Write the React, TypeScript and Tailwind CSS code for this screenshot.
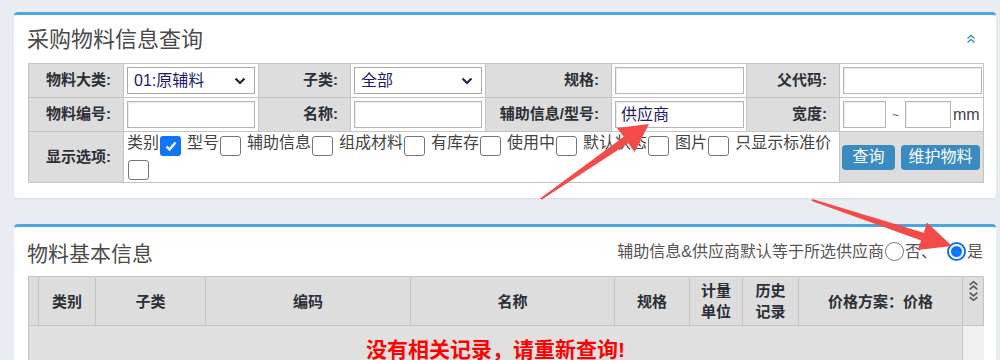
import type { ReactNode } from "react";

const FONT = "font-['Liberation_Sans','Noto_Sans_CJK_SC',sans-serif]";

function Chevron() {
  return (
    <svg width="12" height="8" viewBox="0 0 12 8" className="shrink-0">
      <polyline points="1.5,1.5 6,6 10.5,1.5" fill="none" stroke="#1f2547" strokeWidth="2.2" />
    </svg>
  );
}

function Select({ value, width }: { value: string; width: string }) {
  return (
    <div
      className={`flex h-[27px] items-center justify-between border border-[#a9a9a9] bg-white pl-[6px] pr-[8px] text-[16px] text-[#1e1b6b] ${width}`}
    >
      <span>{value}</span>
      <Chevron />
    </div>
  );
}

function Input({ value = "", className = "" }: { value?: string; className?: string }) {
  return (
    <div
      className={`flex h-[27px] items-center border border-[#b5b5b5] bg-white pl-[5px] text-[16px] text-[#1e1b6b] shadow-[inset_1px_1px_1px_rgba(0,0,0,0.08)] ${className}`}
    >
      {value}
    </div>
  );
}

function Label({ children }: { children: ReactNode }) {
  return (
    <td className="border border-[#c4c4c4] bg-[#dddddd] pr-[12px] text-right text-[15px] font-bold text-[#2b2f36]">
      {children}
    </td>
  );
}

function Box({ checked = false }: { checked?: boolean }) {
  if (checked) {
    return (
      <span className="ml-[1px] mr-[6px] mt-[4px] flex h-[20px] w-[21px] shrink-0 items-center justify-center rounded-[3px] bg-[#0f74f5]">
        <svg width="14" height="14" viewBox="0 0 14 14">
          <polyline points="2.5,7.5 5.5,10.5 11.5,3.5" fill="none" stroke="white" strokeWidth="2.4" />
        </svg>
      </span>
    );
  }
  return (
    <span className="ml-[1px] mr-[6px] mt-[4px] block h-[20px] w-[21px] shrink-0 rounded-[3px] border-[1.5px] border-[#767676] bg-white" />
  );
}

function Radio({ checked = false }: { checked?: boolean }) {
  if (checked) {
    return (
      <span className="mx-[1px] flex h-[19px] w-[19px] items-center justify-center rounded-full border-2 border-[#0f74f5] bg-white">
        <span className="h-[11px] w-[11px] rounded-full bg-[#0f74f5]" />
      </span>
    );
  }
  return <span className="mx-[1px] block h-[19px] w-[19px] rounded-full border-[1.5px] border-[#767676] bg-white" />;
}

const OPTIONS = ["类别", "型号", "辅助信息", "组成材料", "有库存", "使用中", "默认状态", "图片", "只显示标准价"];

function DoubleUp({ color, size = 10 }: { color: string; size?: number }) {
  return (
    <svg width={size} height={size} viewBox="0 0 10 10">
      <polyline points="1.5,4.5 5,1.5 8.5,4.5" fill="none" stroke={color} strokeWidth="1.4" />
      <polyline points="1.5,8.5 5,5.5 8.5,8.5" fill="none" stroke={color} strokeWidth="1.4" />
    </svg>
  );
}

function DoubleDown({ color, size = 10 }: { color: string; size?: number }) {
  return (
    <svg width={size} height={size} viewBox="0 0 10 10">
      <polyline points="1.5,1.5 5,4.5 8.5,1.5" fill="none" stroke={color} strokeWidth="1.4" />
      <polyline points="1.5,5.5 5,8.5 8.5,5.5" fill="none" stroke={color} strokeWidth="1.4" />
    </svg>
  );
}

const HEAD = [
  { w: "w-[10px]", t: "" },
  { w: "w-[57px]", t: "类别" },
  { w: "w-[110px]", t: "子类" },
  { w: "w-[205px]", t: "编码" },
  { w: "w-[204px]", t: "名称" },
  { w: "w-[75px]", t: "规格" },
  { w: "w-[53px]", t: "计量\n单位" },
  { w: "w-[56px]", t: "历史\n记录" },
  { w: "w-[164px]", t: "价格方案：价格" },
];

export default function App() {
  return (
    <div className={`relative h-[360px] w-[1000px] overflow-hidden bg-[#e9edf2] pl-[14px] pr-[4px] pt-[12px] ${FONT}`}>
      {/* 查询 */}
      <div className="rounded-[4px] border-t-[3px] border-[#4aa5e0] bg-white pb-[15px] shadow-[0_1px_2px_rgba(0,0,0,0.08)]">
        <div className="flex h-[48px] items-center justify-between pl-[13px] pr-[20px]">
          <h2 className="text-[22px] text-[#4a4a4a]">采购物料信息查询</h2>
          <DoubleUp color="#3c8dbc" />
        </div>
        <table className="ml-[14px] w-[955px] table-fixed border-collapse">
          <colgroup>
            <col className="w-[95px]" />
            <col className="w-[135px]" />
            <col className="w-[92px]" />
            <col className="w-[135px]" />
            <col className="w-[126px]" />
            <col className="w-[135px]" />
            <col className="w-[93px]" />
            <col className="w-[144px]" />
          </colgroup>
          <tbody>
            <tr className="h-[34px]">
              <Label>物料大类:</Label>
              <td className="border border-[#c4c4c4] px-[3px]">
                <Select value="01:原辅料" width="w-[128px]" />
              </td>
              <Label>子类:</Label>
              <td className="border border-[#c4c4c4] px-[3px]">
                <Select value="全部" width="w-[128px]" />
              </td>
              <Label>规格:</Label>
              <td className="border border-[#c4c4c4] px-[3px]">
                <Input className="w-[129px]" />
              </td>
              <Label>父代码:</Label>
              <td className="border border-[#c4c4c4] px-[3px]">
                <Input className="w-[139px]" />
              </td>
            </tr>
            <tr className="h-[34px]">
              <Label>物料编号:</Label>
              <td className="border border-[#c4c4c4] px-[3px]">
                <Input className="w-[128px]" />
              </td>
              <Label>名称:</Label>
              <td className="border border-[#c4c4c4] px-[3px]">
                <Input className="w-[128px]" />
              </td>
              <Label>辅助信息/型号:</Label>
              <td className="border border-[#c4c4c4] px-[3px]">
                <Input value="供应商" className="w-[129px]" />
              </td>
              <Label>宽度:</Label>
              <td className="border border-[#c4c4c4] px-[3px]">
                <div className="flex items-center text-[15px] text-[#333]">
                  <Input className="w-[43px]" />
                  <span className="w-[19px] text-center text-[12px] text-[#666]">~</span>
                  <Input className="w-[46px]" />
                  <span className="ml-[2px] text-[16px] text-[#444]">mm</span>
                </div>
              </td>
            </tr>
            <tr className="h-[51px]">
              <Label>显示选项:</Label>
              <td colSpan={6} className="border border-[#c4c4c4] pl-[3px] align-top">
                <div className="flex flex-wrap text-[16px] leading-[21px] text-[#444]">
                  {OPTIONS.map((o, i) => (
                    <span key={o} className="contents">
                      <span className="h-[21px]">{o}</span>
                      <Box checked={i === 0} />
                    </span>
                  ))}
                </div>
              </td>
              <td className="border border-[#c4c4c4] bg-[#dddddd] pl-[2px]">
                <div className="flex gap-[6px]">
                  <button className="h-[25px] w-[53px] rounded-[4px] bg-[#3a8bc2] text-[16px] text-white">查询</button>
                  <button className="h-[25px] w-[79px] rounded-[4px] bg-[#3a8bc2] text-[16px] text-white">维护物料</button>
                </div>
              </td>
            </tr>
          </tbody>
        </table>
      </div>

      {/* 物料基本信息 */}
      <div className="mt-[26px] rounded-[4px] border-t-[3px] border-[#4aa5e0] bg-white">
        <div className="flex h-[49px] items-center justify-between pl-[13px] pr-[13px]">
          <h2 className="mt-[4px] text-[21px] text-[#4a4a4a]">物料基本信息</h2>
          <div className="flex items-center text-[16px] text-[#555]">
            <span>辅助信息&amp;供应商默认等于所选供应商</span>
            <Radio />
            <span className="mr-[9px]">否、</span>
            <Radio checked />
            <span>是</span>
          </div>
        </div>
        <table className="ml-[14px] w-[955px] table-fixed border-collapse">
          <colgroup>
            {HEAD.map((h, i) => (
              <col key={i} className={h.w} />
            ))}
            <col className="w-[21px]" />
          </colgroup>
          <thead>
            <tr className="h-[49px] bg-[#dddddd]">
              {HEAD.map((h, i) => (
                <th
                  key={i}
                  className="whitespace-pre-line border border-[#c4c4c4] text-center text-[15px] font-bold leading-[21px] text-[#2b2f36]"
                >
                  {h.t}
                </th>
              ))}
              <th className="border border-[#c4c4c4] align-top">
                <div className="flex flex-col items-center pt-[3px]">
                  <DoubleUp color="#555" size={11} />
                  <DoubleDown color="#555" size={11} />
                </div>
              </th>
            </tr>
          </thead>
          <tbody>
            <tr className="h-[60px]">
              <td colSpan={9} className="border border-[#c4c4c4] bg-[#e0e0e0] pt-[8px] text-center align-top">
                <span className="text-[21px] font-bold text-[#ff0000]">没有相关记录，请重新查询!</span>
              </td>
              <td className="bg-[#f0f0f0]" />
            </tr>
          </tbody>
        </table>
      </div>

      {/* 标注箭头 */}
      <svg className="pointer-events-none absolute left-0 top-0" width="1000" height="360">
        <polygon
          points="540.4,198.2 623.7,136.7 617,128 649,124 634.5,152 628.3,143.3 541.6,199.8"
          fill="#f24b48"
        />
        <polygon
          points="811.7,200.9 921.2,240.4 917.5,250 952,246 927,222.5 923.8,232.8 812.3,199.1"
          fill="#f24b48"
        />
      </svg>
    </div>
  );
}
